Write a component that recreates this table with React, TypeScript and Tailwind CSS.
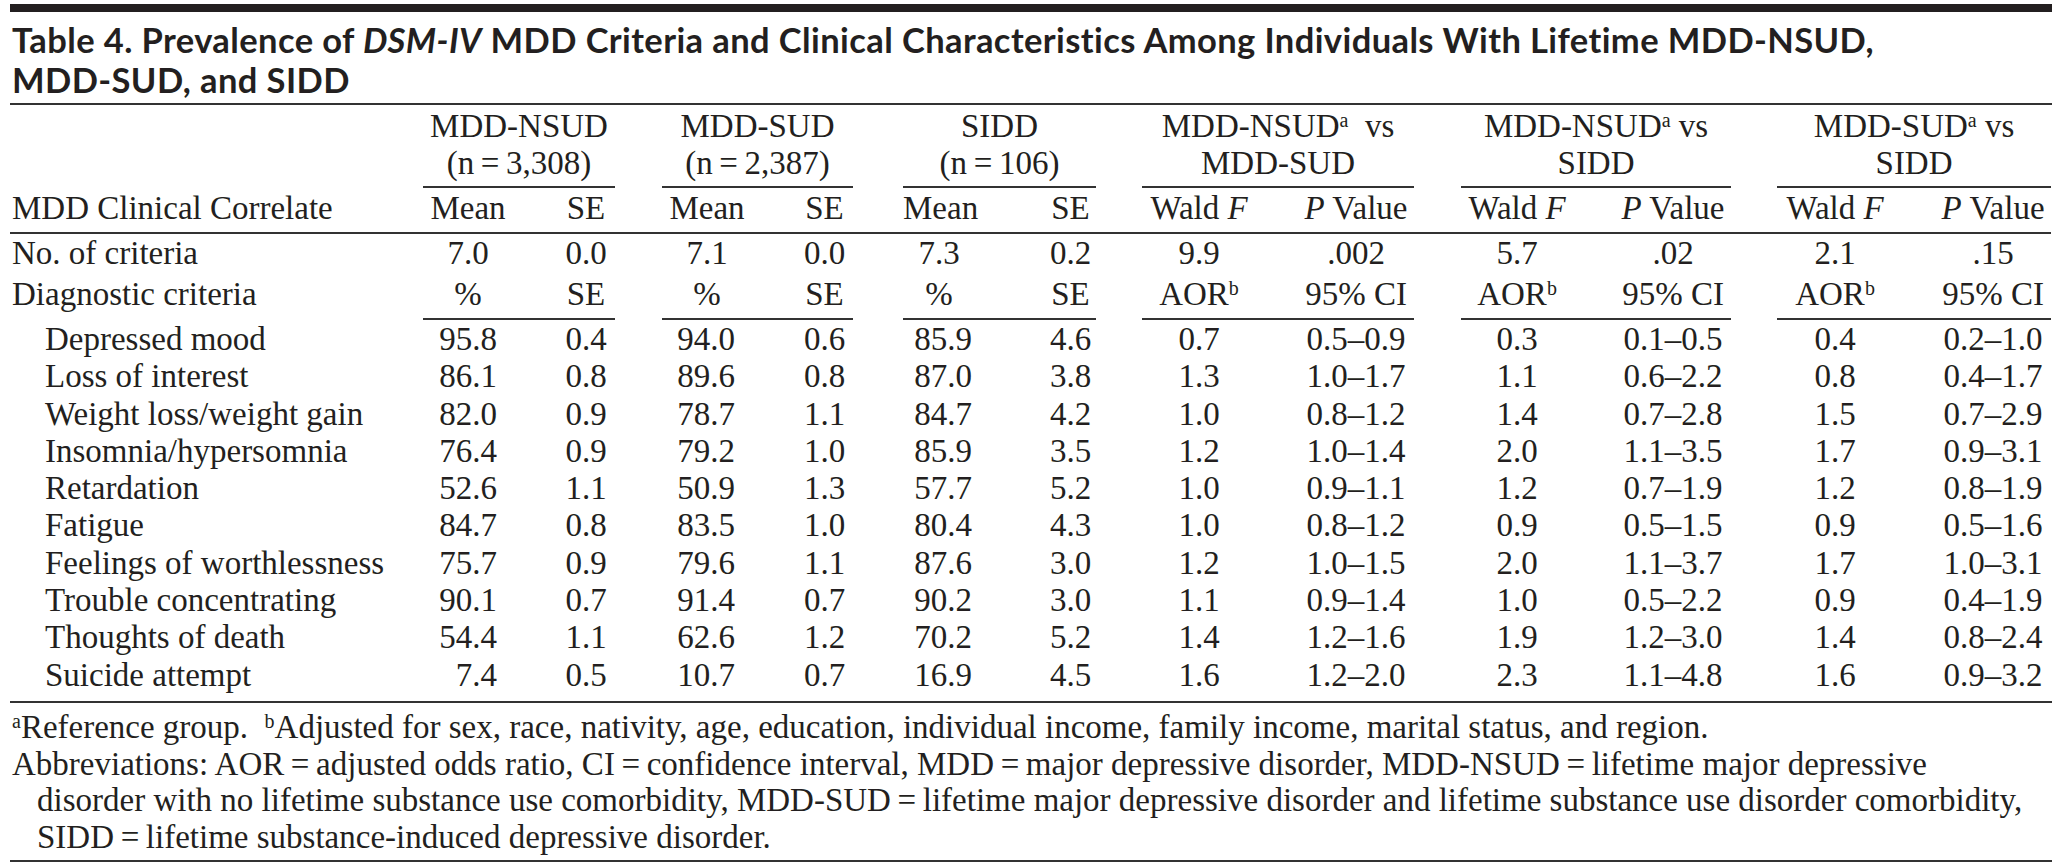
import type { ReactNode } from 'react';

type Row = { label: string; vals: string[] };

const rows: Row[] = [
  { label: 'Depressed mood', vals: ['95.8', '0.4', '94.0', '0.6', '85.9', '4.6', '0.7', '0.5–0.9', '0.3', '0.1–0.5', '0.4', '0.2–1.0'] },
  { label: 'Loss of interest', vals: ['86.1', '0.8', '89.6', '0.8', '87.0', '3.8', '1.3', '1.0–1.7', '1.1', '0.6–2.2', '0.8', '0.4–1.7'] },
  { label: 'Weight loss/weight gain', vals: ['82.0', '0.9', '78.7', '1.1', '84.7', '4.2', '1.0', '0.8–1.2', '1.4', '0.7–2.8', '1.5', '0.7–2.9'] },
  { label: 'Insomnia/hypersomnia', vals: ['76.4', '0.9', '79.2', '1.0', '85.9', '3.5', '1.2', '1.0–1.4', '2.0', '1.1–3.5', '1.7', '0.9–3.1'] },
  { label: 'Retardation', vals: ['52.6', '1.1', '50.9', '1.3', '57.7', '5.2', '1.0', '0.9–1.1', '1.2', '0.7–1.9', '1.2', '0.8–1.9'] },
  { label: 'Fatigue', vals: ['84.7', '0.8', '83.5', '1.0', '80.4', '4.3', '1.0', '0.8–1.2', '0.9', '0.5–1.5', '0.9', '0.5–1.6'] },
  { label: 'Feelings of worthlessness', vals: ['75.7', '0.9', '79.6', '1.1', '87.6', '3.0', '1.2', '1.0–1.5', '2.0', '1.1–3.7', '1.7', '1.0–3.1'] },
  { label: 'Trouble concentrating', vals: ['90.1', '0.7', '91.4', '0.7', '90.2', '3.0', '1.1', '0.9–1.4', '1.0', '0.5–2.2', '0.9', '0.4–1.9'] },
  { label: 'Thoughts of death', vals: ['54.4', '1.1', '62.6', '1.2', '70.2', '5.2', '1.4', '1.2–1.6', '1.9', '1.2–3.0', '1.4', '0.8–2.4'] },
  { label: 'Suicide attempt', vals: ['7.4', '0.5', '10.7', '0.7', '16.9', '4.5', '1.6', '1.2–2.0', '2.3', '1.1–4.8', '1.6', '0.9–3.2'] },
];

const criteriaCount = ['7.0', '0.0', '7.1', '0.0', '7.3', '0.2', '9.9', '.002', '5.7', '.02', '2.1', '.15'];

const colWidths = [
  'w-[413px]',
  'w-[90px]', 'w-[102px]', 'w-[47px]',
  'w-[90px]', 'w-[101px]', 'w-[50px]',
  'w-[90px]', 'w-[103px]', 'w-[46px]',
  'w-[114px]', 'w-[158px]', 'w-[47px]',
  'w-[112px]', 'w-[158px]', 'w-[46px]',
  'w-[116px]', 'w-[158px]',
];

// per group: [left header, left data, right]
const align: [string, string, string][] = [
  ['text-center', 'text-right pr-[16px]', 'text-center pl-[44px]'],
  ['text-center', 'text-right pr-[17px]', 'text-center pl-[44px]'],
  ['text-center pr-[18px]', 'text-right pr-[21px]', 'text-center pl-[52px]'],
  ['text-center', 'text-center', 'text-center pl-[42px]'],
  ['text-center', 'text-center', 'text-center pl-[42px]'],
  ['text-center', 'text-center', 'text-center pl-[42px]'],
];

const Sup = ({ children }: { children: ReactNode }) => <sup className="text-[20px]">{children}</sup>;

const eq = <>{'\u2009'}={'\u2009'}</>;

const groupHeads: ReactNode[] = [
  <>MDD-NSUD<br />(n{eq}3,308)</>,
  <>MDD-SUD<br />(n{eq}2,387)</>,
  <>SIDD<br />(n{eq}106)</>,
  <>MDD-NSUD<Sup>a</Sup>{'\u00a0 '}vs<br />MDD-SUD</>,
  <>MDD-NSUD<Sup>a</Sup> vs<br />SIDD</>,
  <>MDD-SUD<Sup>a</Sup> vs<br />SIDD</>,
];

function GroupCells({
  left,
  right,
  extra,
  dataRow = false,
}: {
  left: (g: number) => ReactNode;
  right: (g: number) => ReactNode;
  extra: string;
  dataRow?: boolean;
}) {
  return (
    <>
      {align.map(([lh, ld, r], g) => (
        <GroupPair key={g} left={left(g)} right={right(g)} lc={dataRow ? ld : lh} rc={r} extra={extra} last={g === 5} />
      ))}
    </>
  );
}

function GroupPair({
  left,
  right,
  lc,
  rc,
  extra,
  last,
}: {
  left: ReactNode;
  right: ReactNode;
  lc: string;
  rc: string;
  extra: string;
  last: boolean;
}) {
  return (
    <>
      <td className={`${lc} ${extra}`}>{left}</td>
      <td className={`${rc} ${extra}`}>{right}</td>
      {!last && <td />}
    </>
  );
}

function GroupHead({ children, last }: { children: ReactNode; last: boolean }) {
  return (
    <>
      <td colSpan={2} className="border-b-2 border-[#333] pt-[3px] pb-[4px] text-center">
        {children}
      </td>
      {!last && <td />}
    </>
  );
}

export default function App() {
  return (
    <div className="min-h-screen bg-white text-[#231f20]">
      <div className="ml-[10px] w-[2042px] pt-[4px]">
        <div className="h-[8px] bg-[#231f20]" />

        <h1 className="mt-[8px] whitespace-nowrap pl-[2px] font-['Lato',sans-serif] text-[34.5px] font-bold leading-[40px] tracking-[0.4px]">
          Table 4. Prevalence of <em>DSM-IV</em> MDD Criteria and Clinical Characteristics Among Individuals With Lifetime MDD-NSUD,
          <br />
          MDD-SUD, and SIDD
        </h1>

        <div className="mt-[3px] h-[2px] bg-[#333]" />

        <table className="w-[2041px] table-fixed border-separate border-spacing-0 font-['Liberation_Serif',serif] text-[33px] whitespace-nowrap">
          <colgroup>
            {colWidths.map((w, i) => (
              <col key={i} className={w} />
            ))}
          </colgroup>
          <thead className="[&_td]:align-top">
            <tr className="leading-[37px]">
              <td />
              {groupHeads.map((h, g) => (
                <GroupHead key={g} last={g === 5}>
                  {h}
                </GroupHead>
              ))}
            </tr>
            <tr className="leading-[37px] [&>td]:border-b-2 [&>td]:border-[#333] [&>td]:pt-[2px] [&>td]:pb-[5px]">
              <td className="pl-[2px] text-left">MDD Clinical Correlate</td>
              <GroupCells
                extra=""
                left={(g) => (g < 3 ? 'Mean' : <>Wald <i>F</i></>)}
                right={(g) => (g < 3 ? 'SE' : <><i>P</i> Value</>)}
              />
            </tr>
          </thead>
          <tbody className="[&_td]:align-top">
            <tr className="leading-[37px]">
              <td className="pl-[2px] pt-[1px] pb-[2px]">No. of criteria</td>
              <GroupCells extra="pt-[1px] pb-[2px]" left={(g) => criteriaCount[g * 2]} right={(g) => criteriaCount[g * 2 + 1]} />
            </tr>
            <tr className="leading-[37px]">
              <td className="pl-[2px] pt-[2px] pb-[5px]">Diagnostic criteria</td>
              <GroupCells
                extra="pt-[2px] pb-[5px] border-b-2 border-[#333]"
                left={(g) => (g < 3 ? '%' : <>AOR<Sup>b</Sup></>)}
                right={(g) => (g < 3 ? 'SE' : '95% CI')}
              />
            </tr>
            {rows.map((r, i) => {
              const pad = i === 0 ? 'pt-[1px]' : i === rows.length - 1 ? 'pb-[7px]' : '';
              return (
                <tr key={r.label} className="leading-[37.3px]">
                  <td className={`pl-[35px] ${pad}`}>{r.label}</td>
                  <GroupCells dataRow extra={pad} left={(g) => r.vals[g * 2]} right={(g) => r.vals[g * 2 + 1]} />
                </tr>
              );
            })}
          </tbody>
        </table>

        <div className="h-[2px] bg-[#333]" />

        <div className="mt-[6px] whitespace-nowrap pl-[2px] font-['Liberation_Serif',serif] text-[33px] leading-[36.7px]">
          <p>
            <Sup>a</Sup>Reference group.{'\u00a0\u00a0'}
            <Sup>b</Sup>Adjusted for sex, race, nativity, age, education, individual income, family income, marital status, and region.
          </p>
          <p>
            Abbreviations: AOR{eq}adjusted odds ratio, CI{eq}confidence interval, MDD{eq}major depressive disorder, MDD-NSUD{eq}lifetime major depressive
          </p>
          <p className="pl-[25px]">
            disorder with no lifetime substance use comorbidity, MDD-SUD{eq}lifetime major depressive disorder and lifetime substance use disorder comorbidity,
          </p>
          <p className="pl-[25px]">SIDD{eq}lifetime substance-induced depressive disorder.</p>
        </div>

        <div className="mt-[4px] h-[2px] bg-[#333]" />
      </div>
    </div>
  );
}
